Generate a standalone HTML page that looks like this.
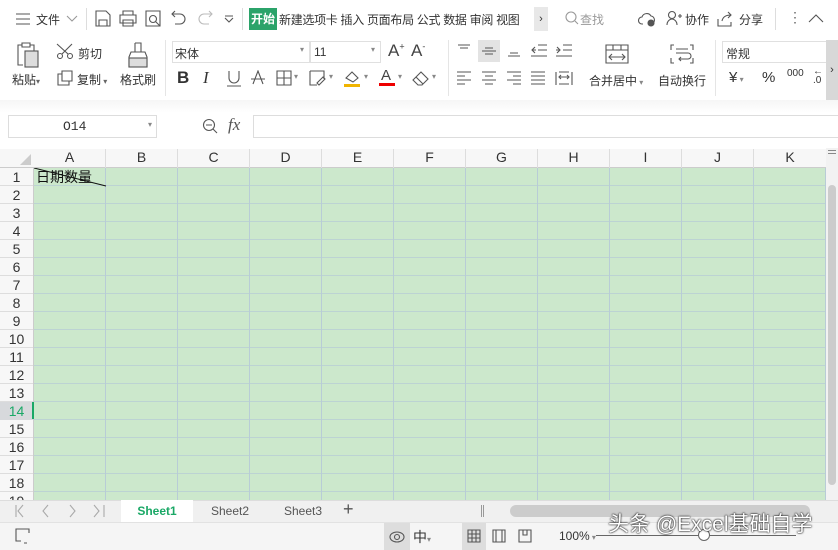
<!DOCTYPE html>
<html><head><meta charset="utf-8"><style>
*{margin:0;padding:0;box-sizing:border-box}
body{width:838px;height:550px;overflow:hidden;background:#fff;font-family:"Liberation Sans","Noto Sans CJK SC",sans-serif;font-size:12px;color:#333;position:relative}
.a{position:absolute;white-space:nowrap}
.ic{position:absolute;stroke:#555;fill:none;stroke-width:1.1}
</style></head><body>
<div class="a" style="left:0;top:0;width:838px;height:37px;background:#fff"></div>
<svg class="ic" style="left:15px;top:12px" width="16" height="14"><path d="M1 2h14M1 7h14M1 12h14"/></svg>
<div class="a" style="left:36px;top:11px;font-size:12px">文件</div>
<svg class="ic" style="left:66px;top:15px;stroke:#999" width="12" height="8"><path d="M1 1l5 5 5-5"/></svg>
<div class="a" style="left:86px;top:8px;width:1px;height:22px;background:#ddd"></div>
<svg class="ic" style="left:95px;top:10px" width="16" height="17"><path d="M1 1h10l4 4v11H1z M4 16v-6h8v6"/></svg>
<svg class="ic" style="left:119px;top:10px" width="18" height="17"><path d="M4 5V1h10v4 M1 5h16v8H1z M4 10h10v6H4z"/></svg>
<svg class="ic" style="left:145px;top:10px" width="17" height="17"><path d="M1 1h14v15H1z"/><circle cx="8" cy="9" r="3.5"/><path d="M10.5 11.5l4 4"/></svg>
<svg class="ic" style="left:171px;top:10px" width="16" height="16"><path d="M4 1L1 4l3 3 M1 4h8a5 5 0 010 10H4"/></svg>
<svg class="ic" style="left:197px;top:10px;stroke:#bbb" width="16" height="16"><path d="M12 1l3 3-3 3 M15 4H7a5 5 0 000 10h5"/></svg>
<svg class="ic" style="left:224px;top:14px" width="10" height="10"><path d="M1 2h8 M1 4l4 4 4-4"/></svg>
<div class="a" style="left:242px;top:8px;width:1px;height:22px;background:#ddd"></div>
<div class="a" style="left:249px;top:8px;width:28px;height:22px;background:#2ba36a;color:#fff;font-weight:bold;line-height:22px;text-align:center">开始</div>
<div class="a" style="left:279px;top:11px;letter-spacing:-0.3px">新建选项卡 插入 页面布局 公式 数据 审阅 视图</div>
<div class="a" style="left:534px;top:7px;width:14px;height:24px;background:#e8e8e8;text-align:center;line-height:24px;font-size:11px">›</div>
<svg class="ic" style="left:565px;top:11px;stroke:#999" width="14" height="14"><circle cx="6" cy="6" r="5"/><path d="M10 10l3 3"/></svg>
<div class="a" style="left:580px;top:11px;color:#999">查找</div>
<svg class="ic" style="left:638px;top:11px" width="18" height="16"><path d="M5 13H4a3 3 0 010-7 5 5 0 019-1 4 4 0 012 7"/><circle cx="13" cy="12" r="3" fill="#555"/></svg>
<svg class="ic" style="left:666px;top:10px" width="16" height="16"><circle cx="6" cy="5" r="3.5"/><path d="M1 15c0-4 3-6 5-6s5 2 5 6 M12 6h4 M14 4v4"/></svg>
<div class="a" style="left:685px;top:11px">协作</div>
<svg class="ic" style="left:717px;top:11px" width="16" height="16"><path d="M1 8v7h13v-4 M5 10c1-5 5-6 9-6 M11 1l3 3-3 3"/></svg>
<div class="a" style="left:739px;top:11px">分享</div>
<div class="a" style="left:775px;top:8px;width:1px;height:22px;background:#ddd"></div>
<div class="a" style="left:788px;top:9px;font-size:14px;color:#666">⋮</div>
<svg class="ic" style="left:808px;top:13px" width="16" height="10"><path d="M1 9l7-7 7 7"/></svg>
<!-- ribbon -->
<svg class="ic" style="left:17px;top:41px" width="24" height="28"><path d="M5 4H1v20h5 M5 2h8v4H5z M13 4h4v6"/><rect x="8" y="10" width="13" height="16" fill="#ddd"/></svg>
<div class="a" style="left:12px;top:71px">粘贴<span style="font-size:8px;color:#666">▾</span></div>
<svg class="ic" style="left:56px;top:43px" width="18" height="16"><circle cx="4" cy="13" r="2.5"/><circle cx="14" cy="13" r="2.5"/><path d="M1 1l11 10 M16 1L6 11"/></svg>
<div class="a" style="left:78px;top:45px">剪切</div>
<svg class="ic" style="left:57px;top:70px" width="16" height="16"><path d="M5 1h10v10H5z M5 4H1v11h11v-4"/></svg>
<div class="a" style="left:77px;top:71px">复制<span style="font-size:8px;color:#666"> ▾</span></div>
<svg class="ic" style="left:128px;top:42px" width="20" height="26"><path d="M7 1h6v9 M7 1v9 M3 10h14l2 5v10H1V15z"/><rect x="1" y="16" width="18" height="9" fill="#ddd"/></svg>
<div class="a" style="left:120px;top:71px">格式刷</div>
<div class="a" style="left:165px;top:40px;width:1px;height:56px;background:#e5e5e5"></div>
<div class="a" style="left:172px;top:41px;width:138px;height:22px;border:1px solid #e0e0e0"></div>
<div class="a" style="left:175px;top:45px">宋体</div>
<div class="a" style="left:300px;top:45px;font-size:8px;color:#888">▾</div>
<div class="a" style="left:310px;top:41px;width:71px;height:22px;border:1px solid #e0e0e0"></div>
<div class="a" style="left:314px;top:45px">11</div>
<div class="a" style="left:371px;top:45px;font-size:8px;color:#888">▾</div>
<div class="a" style="left:388px;top:41px;font-size:17px;color:#444">A<sup style="font-size:9px">+</sup></div>
<div class="a" style="left:411px;top:41px;font-size:17px;color:#444">A<sup style="font-size:9px">-</sup></div>
<div class="a" style="left:177px;top:68px;font-size:17px;font-weight:bold;color:#333">B</div>
<div class="a" style="left:203px;top:68px;font-size:17px;font-style:italic;font-family:'Liberation Serif';color:#333">I</div>
<svg class="ic" style="left:226px;top:70px" width="16" height="17"><path d="M3 1v7a5 5 0 0010 0V1 M1 16h14"/></svg>
<svg class="ic" style="left:250px;top:70px" width="16" height="17"><path d="M3 14L8 1l5 13 M1 9h14"/></svg>
<svg class="ic" style="left:276px;top:70px" width="16" height="16"><path d="M1 1h14v14H1z M8 1v14 M1 8h14"/></svg>
<div class="a" style="left:294px;top:72px;font-size:8px;color:#888">▾</div>
<svg class="ic" style="left:309px;top:70px" width="18" height="17"><path d="M1 1h14v8 M1 1v14h7 M10 15l6-6-2-2-6 6z"/></svg>
<div class="a" style="left:329px;top:72px;font-size:8px;color:#888">▾</div>
<svg class="ic" style="left:343px;top:69px" width="18" height="18"><path d="M3 9l6-6 6 6-5 4z"/><rect x="1" y="15" width="16" height="3" fill="#f0b400" stroke="none"/></svg>
<div class="a" style="left:364px;top:72px;font-size:8px;color:#888">▾</div>
<div class="a" style="left:381px;top:67px;font-size:15px;color:#444">A</div>
<div class="a" style="left:379px;top:83px;width:16px;height:3px;background:#e00"></div>
<div class="a" style="left:398px;top:72px;font-size:8px;color:#888">▾</div>
<svg class="ic" style="left:412px;top:70px" width="18" height="16"><path d="M1 10l8-8 7 7-6 6H6z M4 7l7 7"/></svg>
<div class="a" style="left:432px;top:72px;font-size:8px;color:#888">▾</div>
<div class="a" style="left:448px;top:40px;width:1px;height:56px;background:#e5e5e5"></div>
<svg class="ic" style="left:456px;top:44px" width="16" height="14"><path d="M2 1h12 M4 4h8"/></svg>
<div class="a" style="left:478px;top:40px;width:22px;height:22px;background:#e3e3e3"></div>
<svg class="ic" style="left:481px;top:44px" width="16" height="14"><path d="M4 4h8 M1 7h14 M4 10h8"/></svg>
<svg class="ic" style="left:506px;top:44px" width="16" height="14"><path d="M4 9h8 M2 12h12"/></svg>
<svg class="ic" style="left:530px;top:44px" width="18" height="14"><path d="M8 1h9 M8 6h9 M1 12h16 M5 3L2 6l3 3 M2 6h4"/></svg>
<svg class="ic" style="left:555px;top:44px" width="18" height="14"><path d="M8 1h9 M8 6h9 M1 12h16 M2 3l3 3-3 3 M1 6h4"/></svg>
<svg class="ic" style="left:456px;top:71px" width="16" height="15"><path d="M1 1h14 M1 5h8 M1 9h14 M1 13h8"/></svg>
<svg class="ic" style="left:481px;top:71px" width="16" height="15"><path d="M1 1h14 M4 5h8 M1 9h14 M4 13h8"/></svg>
<svg class="ic" style="left:506px;top:71px" width="16" height="15"><path d="M1 1h14 M7 5h8 M1 9h14 M7 13h8"/></svg>
<svg class="ic" style="left:530px;top:71px" width="16" height="15"><path d="M1 1h14 M1 5h14 M1 9h14 M1 13h14"/></svg>
<svg class="ic" style="left:555px;top:71px" width="18" height="15"><path d="M1 1v13 M17 1v13 M4 1h10 M4 13h10 M5 6h8 M6 4l-2 2 2 2 M12 4l2 2-2 2"/></svg>
<svg class="ic" style="left:605px;top:44px" width="24" height="20"><path d="M1 1h22v18H1z M1 6h22 M8 1v5 M16 1v5 M4 13h16 M7 10l-3 3 3 3 M17 10l3 3-3 3"/></svg>
<div class="a" style="left:589px;top:72px">合并居中<span style="font-size:8px;color:#888"> ▾</span></div>
<svg class="ic" style="left:670px;top:44px" width="24" height="20"><path d="M4 1H1v5 M20 1h3v5 M1 14v5h3 M23 14v5h-3 M6 5h12 M6 9h12a3 3 0 010 6H9 M11 13l-2 2 2 2"/></svg>
<div class="a" style="left:658px;top:72px">自动换行</div>
<div class="a" style="left:715px;top:40px;width:1px;height:56px;background:#e5e5e5"></div>
<div class="a" style="left:722px;top:41px;width:104px;height:22px;border:1px solid #e0e0e0;border-right:none"></div>
<div class="a" style="left:726px;top:45px">常规</div>
<div class="a" style="left:729px;top:69px;font-size:15px">¥<span style="font-size:8px;color:#888"> ▾</span></div>
<div class="a" style="left:762px;top:69px;font-size:15px">%</div>
<div class="a" style="left:787px;top:68px;font-size:10px">000</div>
<div class="a" style="left:813px;top:67px;font-size:10px;line-height:9px">←<br>.0</div>
<div class="a" style="left:826px;top:40px;width:12px;height:60px;background:#d8d8d8;text-align:center;line-height:60px;font-size:11px">›</div>
<div class="a" style="left:0;top:100px;width:838px;height:13px;background:linear-gradient(#f6f6f6,#fff)"></div>
<!-- formula bar -->
<div class="a" style="left:8px;top:115px;width:149px;height:23px;border:1px solid #ddd"></div>
<div class="a" style="left:63px;top:119px;font-family:'Liberation Mono';font-size:13px">O14</div>
<div class="a" style="left:148px;top:120px;font-size:8px;color:#888">▾</div>
<svg class="ic" style="left:202px;top:118px;stroke:#555" width="16" height="16"><circle cx="7" cy="7" r="5.5"/><path d="M4 7h6 M11 11l4 4"/></svg>
<div class="a" style="left:228px;top:115px;font-size:17px;font-style:italic;font-family:'Liberation Serif';color:#555">fx</div>
<div class="a" style="left:253px;top:115px;width:585px;height:23px;border:1px solid #ddd;border-right:none"></div>
<!-- grid -->
<div class="a" style="left:0;top:148px;width:838px;height:352px;background:#fff"></div>
<div class="a" style="left:0;top:149px;width:826px;height:19px;background:#f7f7f7;border-bottom:1px solid #ccc"></div>
<svg class="a" style="left:20px;top:154px" width="12" height="12"><path d="M11 0v11H0z" fill="#ccc"/></svg>
<div class="a" style="left:34px;top:168px;width:792px;height:332px;background:#cce8cc;
background-image:linear-gradient(90deg,#b8ccd6 1px,transparent 1px),linear-gradient(#bcd3d3 1px,transparent 1px);background-size:72px 18px;background-position:71px 0,0 17px"></div>
<div class="a" style="left:0;top:168px;width:34px;height:332px;background:#f7f7f7;border-right:1px solid #ccc;
background-image:linear-gradient(#ddd 1px,transparent 1px);background-size:34px 18px;background-position:0 17px"></div>
<div class="a" style="left:0;top:402px;width:33px;height:18px;background:#d7d9dc"></div>
<div class="a" style="left:32px;top:402px;width:2px;height:17px;background:#1aa866"></div>
<div class="a" style="left:34px;top:149px;height:19px;display:flex;font-size:14px;line-height:17px">
<div style="width:72px;text-align:center;border-right:1px solid #ddd">A</div><div style="width:72px;text-align:center;border-right:1px solid #ddd">B</div><div style="width:72px;text-align:center;border-right:1px solid #ddd">C</div><div style="width:72px;text-align:center;border-right:1px solid #ddd">D</div><div style="width:72px;text-align:center;border-right:1px solid #ddd">E</div><div style="width:72px;text-align:center;border-right:1px solid #ddd">F</div><div style="width:72px;text-align:center;border-right:1px solid #ddd">G</div><div style="width:72px;text-align:center;border-right:1px solid #ddd">H</div><div style="width:72px;text-align:center;border-right:1px solid #ddd">I</div><div style="width:72px;text-align:center;border-right:1px solid #ddd">J</div><div style="width:72px;text-align:center">K</div></div>
<div class="a" style="left:0;top:168px;width:33px;font-size:14px;line-height:18px;text-align:center">1<br>2<br>3<br>4<br>5<br>6<br>7<br>8<br>9<br>10<br>11<br>12<br>13<br><span style="color:#1aa866">14</span><br>15<br>16<br>17<br>18<br>19</div>
<div class="a" style="left:36px;top:168px;font-size:14px;color:#111;line-height:18px">日期数量</div>
<svg class="a" style="left:34px;top:168px" width="74" height="20"><path d="M0 0L72 18" stroke="#111" stroke-width="1"/></svg>
<!-- vscroll -->
<div class="a" style="left:826px;top:148px;width:12px;height:352px;background:#f2f2f2"></div>
<div class="a" style="left:828px;top:150px;width:8px;height:1px;background:#888;box-shadow:0 3px 0 #888"></div>
<div class="a" style="left:828px;top:185px;width:8px;height:300px;background:#ccc;border-radius:4px"></div>
<!-- tabs -->
<div class="a" style="left:0;top:500px;width:838px;height:22px;background:#f0f0f0;border-top:1px solid #ddd"></div>
<svg class="ic" style="left:14px;top:504px;stroke:#aaa" width="92" height="14"><path d="M2 1v12 M9 1L4 7l5 6 M34 1l-5 6 5 6 M56 1l5 6-5 6 M80 1l5 6-5 6 M90 1v12"/></svg>
<div class="a" style="left:121px;top:500px;width:72px;height:22px;background:#fff;color:#1aa866;font-weight:bold;text-align:center;line-height:22px">Sheet1</div>
<div class="a" style="left:211px;top:504px;color:#555">Sheet2</div>
<div class="a" style="left:284px;top:504px;color:#555">Sheet3</div>
<div class="a" style="left:343px;top:499px;font-size:18px;color:#555">+</div>
<div class="a" style="left:481px;top:505px;width:1px;height:12px;background:#999;box-shadow:2px 0 0 #999"></div>
<div class="a" style="left:510px;top:505px;width:300px;height:12px;background:#ccc;border-radius:6px"></div>
<!-- status -->
<div class="a" style="left:0;top:522px;width:838px;height:28px;background:#f5f5f5;border-top:1px solid #e2e2e2"></div>
<svg class="ic" style="left:15px;top:528px" width="18" height="16"><path d="M14 5V1H1v12h5 M9 15h3"/></svg>
<div class="a" style="left:384px;top:523px;width:26px;height:27px;background:#ddd"></div>
<svg class="ic" style="left:388px;top:528px" width="18" height="16"><ellipse cx="9" cy="9" rx="7" ry="5"/><circle cx="9" cy="9" r="2.5"/></svg>
<div class="a" style="left:413px;top:527px;font-size:14px">中<span style="font-size:8px;color:#888">▾</span></div>
<div class="a" style="left:462px;top:523px;width:24px;height:27px;background:#ddd"></div>
<svg class="ic" style="left:467px;top:529px" width="14" height="14"><path d="M1 1h12v12H1z M1 5h12 M1 9h12 M5 1v12 M9 1v12"/></svg>
<svg class="ic" style="left:492px;top:529px" width="14" height="14"><path d="M1 1h12v12H1z M4 1v12 M10 1v12"/></svg>
<svg class="ic" style="left:518px;top:529px" width="14" height="14"><path d="M1 1h12v12H1z M5 1v5h4V1"/></svg>
<div class="a" style="left:559px;top:529px;font-size:12px">100%<span style="font-size:8px;color:#888"> ▾</span></div>
<div class="a" style="left:596px;top:535px;width:200px;height:1px;background:#666"></div>
<div class="a" style="left:698px;top:529px;width:12px;height:12px;border:1px solid #666;border-radius:50%;background:#fff"></div>
<div class="a" style="left:608px;top:508px;font-size:21px;color:#fff;text-shadow:0 0 2px #000,0 0 1px #000">头条 @Excel基础自学</div>
</body></html>
